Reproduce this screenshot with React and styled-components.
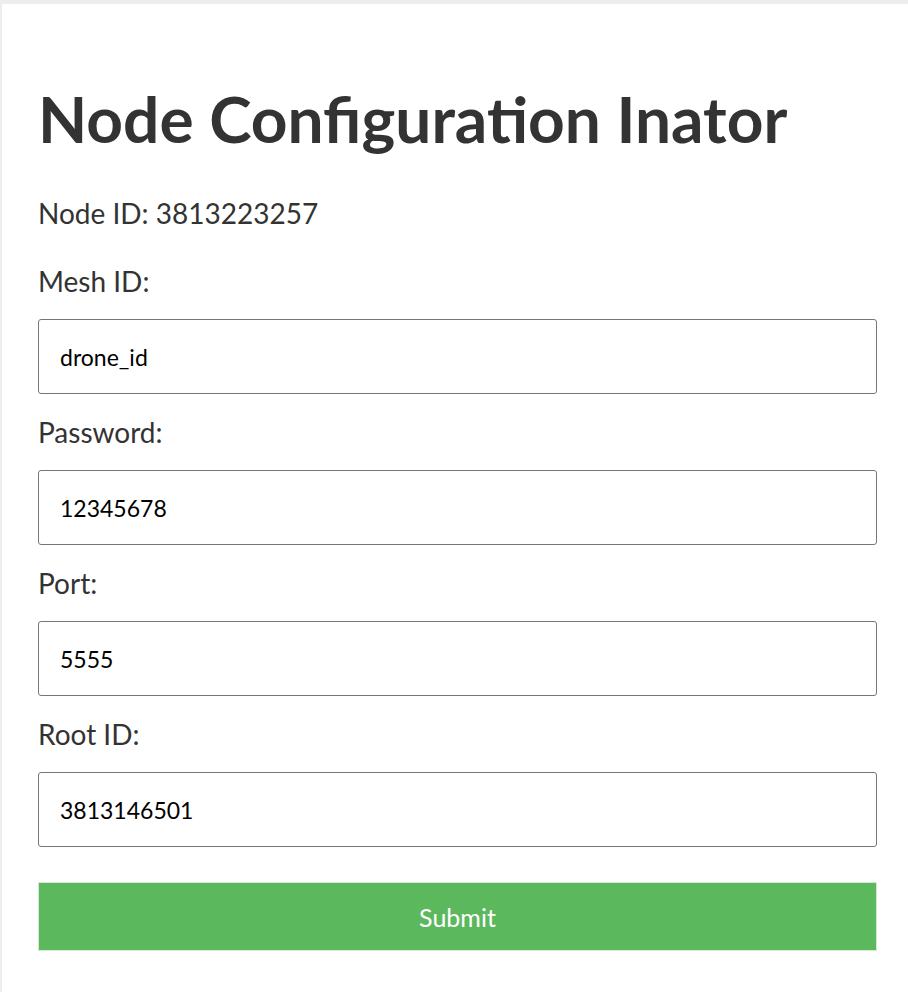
import { useState } from "react";
import styled, { createGlobalStyle } from "styled-components";

const GlobalStyle = createGlobalStyle`
  html, body {
    margin: 0;
    padding: 0;
    background: #ededed;
  }
  body {
    padding: 4px 0 0 2px;
    font-family: Lato, "Open Sans", sans-serif;
  }
`;

const Page = styled.div`
  background: #fff;
  min-height: 988px;
  padding: 0 31px 0 36px;
  box-sizing: border-box;
`;

const Title = styled.h1`
  margin: 0;
  padding-top: 75px;
  font-size: 64px;
  font-weight: 700;
  color: #333;
  line-height: 80px;
`;

const Form = styled.form`
  display: flex;
  flex-direction: column;
`;

const Info = styled.p`
  margin: 34px 0 10px;
  font-size: 28px;
  color: #333;
  line-height: 40px;
`;

const Label = styled.label`
  display: block;
  margin-top: 18px;
  font-size: 28px;
  color: #333;
  line-height: 40px;
`;

const Field = styled.input`
  display: block;
  box-sizing: border-box;
  width: 100%;
  height: 75px;
  margin-top: 18px;
  padding: 0 21px;
  border: 1px solid #767676;
  border-radius: 3px;
  font-family: Lato, "Open Sans", sans-serif;
  font-size: 23px;
  color: #000;
  background: #fff;
`;

const SubmitButton = styled.button`
  margin-top: 35px;
  height: 69px;
  width: 100%;
  border: 1px solid #d6e9d3;
  background: #5cb85c;
  color: #fff;
  font-family: Lato, "Open Sans", sans-serif;
  font-size: 25px;
  cursor: pointer;
`;

const App = () => {
  const [values, setValues] = useState({
    mesh: "drone_id",
    password: "12345678",
    port: "5555",
    root: "3813146501",
  });

  const update = (key) => (e) => setValues({ ...values, [key]: e.target.value });

  return (
    <>
      <GlobalStyle />
      <Page>
        <Title>Node Configuration Inator</Title>
        <Form onSubmit={(e) => e.preventDefault()}>
          <Info>Node ID: 3813223257</Info>
          <Label>
            Mesh ID:
            <Field value={values.mesh} onChange={update("mesh")} />
          </Label>
          <Label>
            Password:
            <Field value={values.password} onChange={update("password")} />
          </Label>
          <Label>
            Port:
            <Field value={values.port} onChange={update("port")} />
          </Label>
          <Label>
            Root ID:
            <Field value={values.root} onChange={update("root")} />
          </Label>
          <SubmitButton type="submit">Submit</SubmitButton>
        </Form>
      </Page>
    </>
  );
};

export default App;
